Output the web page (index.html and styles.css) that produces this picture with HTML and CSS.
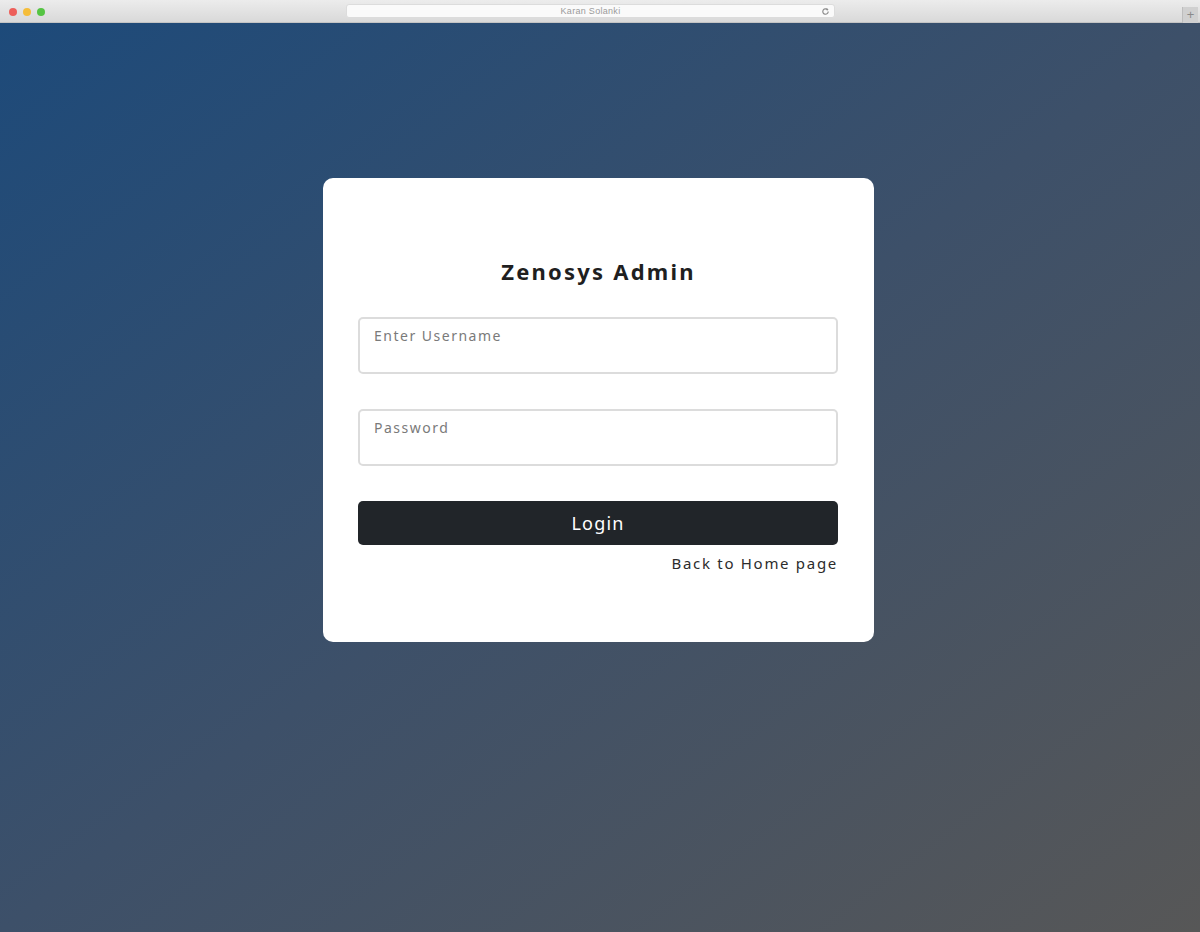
FILE: index.html
```html
<!DOCTYPE html>
<html>
<head>
<meta charset="utf-8">
<link rel="stylesheet" href="styles.css">
</head>
<body>
<div class="chrome">
  <div class="lights">
    <span class="light red"></span>
    <span class="light yellow"></span>
    <span class="light green"></span>
  </div>
  <div class="address">
    <span class="addr-text">Karan Solanki</span>
    <svg class="reload" width="9" height="9" viewBox="0 0 10 10"><path d="M8 5a3 3 0 1 1-1-2.2" fill="none" stroke="#8a8a8a" stroke-width="1.3"/><path d="M6 1.2 8.3 2.6 6.6 4.4z" fill="#8a8a8a"/></svg>
  </div>
  <div class="newtab">+</div>
</div>
<main class="stage">
  <div class="card">
    <h1 class="title">Zenosys Admin</h1>
    <form class="form">
      <input class="field" type="text" placeholder="Enter Username">
      <input class="field" type="password" placeholder="Password">
      <button class="btn" type="button">Login</button>
      <a class="back" href="#">Back to Home page</a>
    </form>
  </div>
</main>
</body>
</html>
```
FILE: styles.css
```css
* { box-sizing: border-box; }
html, body { margin: 0; padding: 0; }
body {
  width: 1200px;
  height: 932px;
  font-family: "Noto Sans", "Open Sans", sans-serif;
  overflow: hidden;
  display: flex;
  flex-direction: column;
}
.chrome {
  height: 23px;
  background: linear-gradient(#ececec, #d9d9d9);
  border-bottom: 1px solid #c4c4c4;
  display: flex;
  align-items: flex-start;
  position: relative;
  flex-shrink: 0;
}
.lights {
  display: flex;
  gap: 6px;
  padding: 8px 0 0 9px;
  width: 346px;
}
.light { width: 8px; height: 8px; border-radius: 50%; display: block; }
.red { background: #ed5f5a; }
.yellow { background: #f5bd3a; }
.green { background: #55c443; }
.address {
  margin-top: 4px;
  width: 489px;
  height: 14px;
  background: #fafafa;
  border: 1px solid #dcdcdc;
  border-radius: 3px;
  display: flex;
  align-items: center;
  justify-content: center;
  position: relative;
}
.addr-text {
  font-family: "Liberation Sans", sans-serif;
  font-size: 9px;
  color: #9a9a9a;
  letter-spacing: 0.3px;
}
.reload { position: absolute; right: 4px; top: 2px; }
.newtab {
  position: absolute;
  right: 2px;
  top: 7px;
  width: 16px;
  height: 16px;
  background: #d0d0d0;
  border-left: 1px solid #bdbdbd;
  color: #8a8a8a;
  font-family: "Liberation Sans", sans-serif;
  font-size: 13px;
  line-height: 16px;
  text-align: center;
}
.stage {
  flex: 1;
  background: linear-gradient(to bottom right, #1d4a7a 0%, #3d5069 50%, #575757 100%);
  display: flex;
  justify-content: center;
  align-items: flex-start;
  padding-top: 155px;
}
.card {
  width: 551px;
  height: 464px;
  margin-left: -3px;
  background: #fff;
  border-radius: 10px;
  padding: 78px 35px 0;
}
.title {
  margin: 0 0 31px;
  text-align: center;
  font-size: 22px;
  line-height: 30px;
  font-weight: 700;
  letter-spacing: 2.2px;
  color: #1f1f1f;
}
.form {
  display: flex;
  flex-direction: column;
}
.field {
  width: 480px;
  height: 57px;
  border: 2px solid #dcdcdc;
  border-radius: 5px;
  padding: 0 14px 20px;
  font-family: inherit;
  font-size: 14px;
  letter-spacing: 1.5px;
  margin-bottom: 35px;
  outline: none;
}
.field::placeholder { color: #7a7a7a; }
.btn {
  width: 480px;
  height: 44px;
  border: none;
  border-radius: 5px;
  background: #212529;
  color: #fff;
  font-family: inherit;
  font-size: 18px;
  letter-spacing: 1.2px;
  padding: 0;
  margin-bottom: 8px;
}
.back {
  align-self: flex-end;
  font-size: 15px;
  letter-spacing: 1.7px;
  color: #2c2c2c;
  text-decoration: none;
  margin-right: 1px;
}
```
